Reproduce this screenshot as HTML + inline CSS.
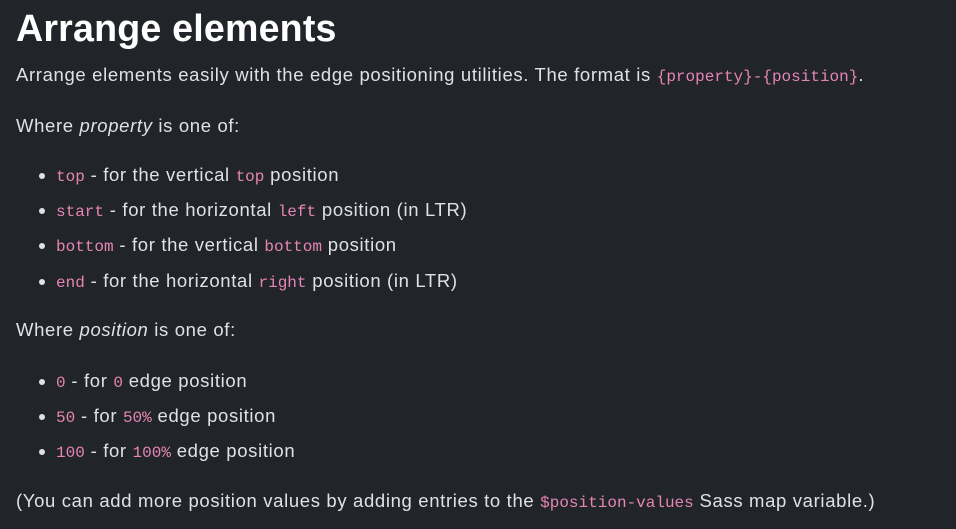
<!DOCTYPE html>
<html><head><meta charset="utf-8"><style>
html,body{margin:0;background:#212529;width:956px;height:529px;overflow:hidden}
body{font-family:"Liberation Sans","DejaVu Sans",sans-serif;color:#dee2e6;font-size:18.5px;letter-spacing:0.65px;position:relative}
.l{position:absolute;left:16px;white-space:nowrap;line-height:24px}
h1{position:absolute;left:16px;top:5px;margin:0;font-size:37.6px;font-weight:bold;color:#fff;line-height:46px;letter-spacing:0.2px}
code{font-family:"Liberation Mono",monospace;color:#e685b5;font-size:16px;letter-spacing:0}
.li{left:56px}
.li:before{content:"";position:absolute;left:-17px;top:10px;width:6px;height:6px;border-radius:50%;background:#dee2e6}
</style></head><body>
<h1>Arrange elements</h1>
<div class="l" style="top:63px">Arrange elements easily with the edge positioning utilities. The format is <code>{property}-{position}</code>.</div>
<div class="l" style="top:114px">Where <i>property</i> is one of:</div>
<div class="l li" style="top:163px"><code>top</code> - for the vertical <code>top</code> position</div>
<div class="l li" style="top:198px"><code>start</code> - for the horizontal <code>left</code> position (in LTR)</div>
<div class="l li" style="top:233px"><code>bottom</code> - for the vertical <code>bottom</code> position</div>
<div class="l li" style="top:269px"><code>end</code> - for the horizontal <code>right</code> position (in LTR)</div>
<div class="l" style="top:318px">Where <i>position</i> is one of:</div>
<div class="l li" style="top:369px"><code>0</code> - for <code>0</code> edge position</div>
<div class="l li" style="top:404px"><code>50</code> - for <code>50%</code> edge position</div>
<div class="l li" style="top:439px"><code>100</code> - for <code>100%</code> edge position</div>
<div class="l" style="top:489px">(You can add more position values by adding entries to the <code>$position-values</code> Sass map variable.)</div>
</body></html>
